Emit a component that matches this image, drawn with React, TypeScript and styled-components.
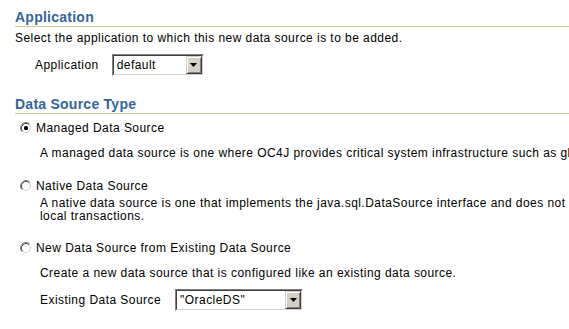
import React from 'react';
import styled, { createGlobalStyle } from 'styled-components';

const GlobalStyle = createGlobalStyle`
  html, body {
    margin: 0;
    padding: 0;
    background: #ffffff;
    overflow: hidden;
  }
  body {
    font-family: "Liberation Sans", Arial, sans-serif;
    font-size: 12px;
    letter-spacing: 0.45px;
    color: #000000;
  }
`;

const Page = styled.div`
  width: 569px;
  height: 329px;
  overflow: hidden;
  padding: 9px 0 0 15px;
  box-sizing: border-box;
`;

const Heading = styled.h2<{ $top?: number }>`
  margin: ${(p) => p.$top ?? 0}px 0 0;
  padding: 0;
  font-size: 14px;
  font-weight: bold;
  letter-spacing: 0.25px;
  line-height: 17px;
  color: #336699;
  border-bottom: 1px solid #cccc99;
`;

const Intro = styled.p`
  margin: 4px 0 0;
  line-height: 14px;
  white-space: nowrap;
`;

const FieldRow = styled.div<{ $indent: number; $gap: number; $top: number }>`
  display: flex;
  align-items: center;
  margin: ${(p) => p.$top}px 0 0 ${(p) => p.$indent}px;
  gap: ${(p) => p.$gap}px;
  line-height: 14px;
`;

const FieldLabel = styled.span`
  white-space: nowrap;
`;

/* two-tone sunken frame of a classic Windows combo box */
const SelectBox = styled.div<{ $width: number }>`
  width: ${(p) => p.$width}px;
  height: 22px;
  box-sizing: border-box;
  border: 1px solid;
  border-color: #808080 #ffffff #ffffff #808080;
  background: #ffffff;
`;

const SelectInner = styled.div`
  display: flex;
  align-items: center;
  height: 100%;
  box-sizing: border-box;
  border: 1px solid;
  border-color: #404040 #d4d0c8 #d4d0c8 #404040;
  padding-left: 3px;
`;

const SelectValue = styled.span`
  flex: 1;
  white-space: nowrap;
  overflow: hidden;
`;

const ArrowButton = styled.span`
  display: flex;
  align-items: center;
  justify-content: center;
  width: 16px;
  height: 18px;
  box-sizing: border-box;
  background: #d4d0c8;
  border: 1px solid;
  border-color: #d4d0c8 #404040 #404040 #d4d0c8;
  box-shadow: inset 1px 1px 0 #ffffff, inset -1px -1px 0 #808080;
`;

const Option = styled.label<{ $top: number }>`
  display: flex;
  align-items: center;
  gap: 4px;
  margin: ${(p) => p.$top}px 0 0 5px;
  line-height: 14px;
  white-space: nowrap;
`;

const Description = styled.p<{ $top: number; $lineHeight?: number }>`
  margin: ${(p) => p.$top}px 0 0 25px;
  line-height: ${(p) => p.$lineHeight ?? 14}px;
  white-space: nowrap;
`;

const RadioIcon = ({ checked }: { checked?: boolean }) => (
  <svg width="12" height="12" viewBox="0 0 12 12">
    <circle cx="6" cy="6" r="5" fill="#ffffff" />
    <path d="M2.11 9.89 A5.5 5.5 0 0 1 9.89 2.11" fill="none" stroke="#808080" />
    <path d="M9.89 2.11 A5.5 5.5 0 0 1 2.11 9.89" fill="none" stroke="#ffffff" />
    <path d="M2.82 9.18 A4.5 4.5 0 0 1 9.18 2.82" fill="none" stroke="#404040" />
    <path d="M9.18 2.82 A4.5 4.5 0 0 1 2.82 9.18" fill="none" stroke="#d4d0c8" />
    {checked && <rect x="4" y="4" width="4" height="4" rx="1.5" fill="#000000" />}
  </svg>
);

const Select = ({ value, width }: { value: string; width: number }) => (
  <SelectBox $width={width}>
    <SelectInner>
      <SelectValue>{value}</SelectValue>
      <ArrowButton>
        <svg width="7" height="4" viewBox="0 0 7 4">
          <path d="M0 0 H7 L3.5 4 Z" fill="#000000" />
        </svg>
      </ArrowButton>
    </SelectInner>
  </SelectBox>
);

export default function App() {
  return (
    <>
      <GlobalStyle />
      <Page>
        <Heading>Application</Heading>
        <Intro>Select the application to which this new data source is to be added.</Intro>
        <FieldRow $indent={20} $gap={13} $top={9}>
          <FieldLabel>Application</FieldLabel>
          <Select value="default" width={92} />
        </FieldRow>

        <Heading $top={20}>Data Source Type</Heading>

        <Option $top={7}>
          <RadioIcon checked />
          Managed Data Source
        </Option>
        <Description $top={11}>
          A managed data source is one where OC4J provides critical system infrastructure such as global
          transactions.
        </Description>

        <Option $top={19}>
          <RadioIcon />
          Native Data Source
        </Option>
        <Description $top={4} $lineHeight={13}>
          A native data source is one that implements the java.sql.DataSource interface and does not
          <br />
          local transactions.
        </Description>

        <Option $top={18}>
          <RadioIcon />
          New Data Source from Existing Data Source
        </Option>
        <Description $top={11}>
          Create a new data source that is configured like an existing data source.
        </Description>
        <FieldRow $indent={25} $gap={14} $top={9}>
          <FieldLabel>Existing Data Source</FieldLabel>
          <Select value={'"OracleDS"'} width={128} />
        </FieldRow>
      </Page>
    </>
  );
}
